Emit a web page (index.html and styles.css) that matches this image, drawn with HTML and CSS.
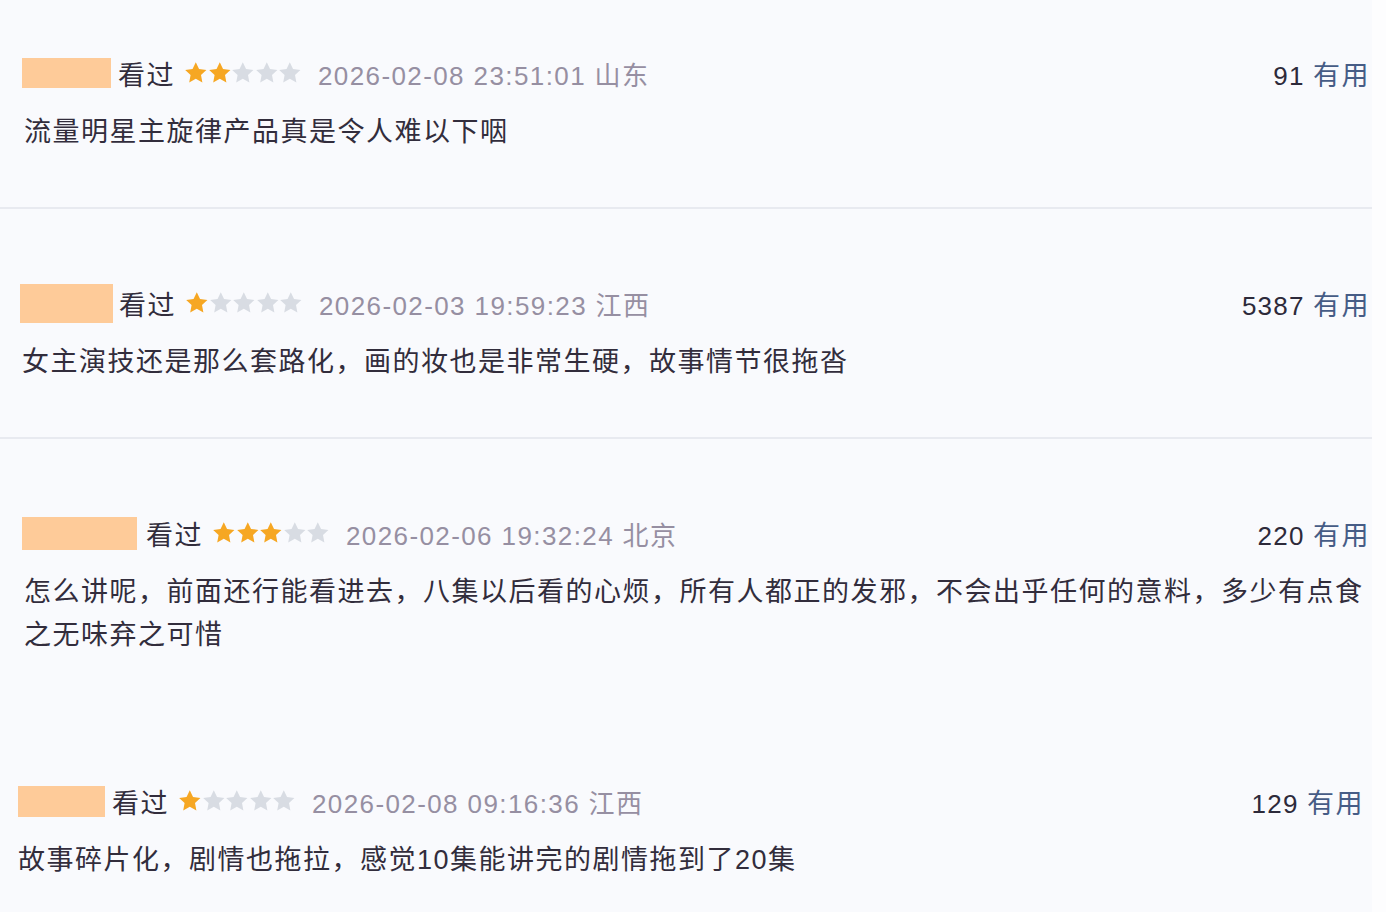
FILE: index.html
```html
<!DOCTYPE html>
<html lang="zh-CN">
<head>
    <meta charset="UTF-8">
    <meta name="viewport" content="width=device-width, initial-scale=1.0">
    <title>短评</title>
    <link rel="stylesheet" href="styles.css">
</head>
<body>
    <svg width="0" height="0" class="defs">
        <defs>
            <symbol id="star" viewBox="0 0 24 24">
                <path d="M12 1.2l3.3 6.9 7.5 1-5.5 5.2 1.4 7.5L12 18.1l-6.7 3.7 1.4-7.5-5.5-5.2 7.5-1z"/>
            </symbol>
        </defs>
    </svg>
    <div class="list">
        <div class="review review-1">
            <div class="header">
                <span class="name name-1"></span>
                <span class="watched">看过</span>
                <span class="stars">
                    <svg class="star on"><use href="#star"/></svg><svg class="star on"><use href="#star"/></svg><svg class="star"><use href="#star"/></svg><svg class="star"><use href="#star"/></svg><svg class="star"><use href="#star"/></svg>
                </span>
                <span class="time">2026-02-08 23:51:01 山东</span>
                <span class="votes"><span class="count">91</span> <span class="useful">有用</span></span>
            </div>
            <p class="comment">流量明星主旋律产品真是令人难以下咽</p>
        </div>

        <div class="review review-2">
            <div class="header">
                <span class="name name-2"></span>
                <span class="watched">看过</span>
                <span class="stars">
                    <svg class="star on"><use href="#star"/></svg><svg class="star"><use href="#star"/></svg><svg class="star"><use href="#star"/></svg><svg class="star"><use href="#star"/></svg><svg class="star"><use href="#star"/></svg>
                </span>
                <span class="time">2026-02-03 19:59:23 江西</span>
                <span class="votes"><span class="count">5387</span> <span class="useful">有用</span></span>
            </div>
            <p class="comment">女主演技还是那么套路化，画的妆也是非常生硬，故事情节很拖沓</p>
        </div>

        <div class="review review-3">
            <div class="header">
                <span class="name name-3"></span>
                <span class="watched">看过</span>
                <span class="stars">
                    <svg class="star on"><use href="#star"/></svg><svg class="star on"><use href="#star"/></svg><svg class="star on"><use href="#star"/></svg><svg class="star"><use href="#star"/></svg><svg class="star"><use href="#star"/></svg>
                </span>
                <span class="time">2026-02-06 19:32:24 北京</span>
                <span class="votes"><span class="count">220</span> <span class="useful">有用</span></span>
            </div>
            <p class="comment">怎么讲呢，前面还行能看进去，八集以后看的心烦，所有人都正的发邪，不会出乎任何的意料，多少有点食之无味弃之可惜</p>
        </div>

        <div class="review review-4">
            <div class="header">
                <span class="name name-4"></span>
                <span class="watched">看过</span>
                <span class="stars">
                    <svg class="star on"><use href="#star"/></svg><svg class="star"><use href="#star"/></svg><svg class="star"><use href="#star"/></svg><svg class="star"><use href="#star"/></svg><svg class="star"><use href="#star"/></svg>
                </span>
                <span class="time">2026-02-08 09:16:36 江西</span>
                <span class="votes"><span class="count">129</span> <span class="useful">有用</span></span>
            </div>
            <p class="comment">故事碎片化，剧情也拖拉，感觉10集能讲完的剧情拖到了20集</p>
        </div>
    </div>
</body>
</html>
```

FILE: styles.css
```css
body {
    margin: 0;
    padding: 0;
    background-color: #fdfdfe;
    font-family: "Liberation Sans", "Noto Sans CJK SC", sans-serif;
    color: #322d3c;
}

.defs {
    position: absolute;
    width: 0;
    height: 0;
}

.list {
    width: 1372px;
    min-height: 912px;
    background-color: #f9fafd;
}

.review {
    padding: 74px 3px 53px 22px;
    border-bottom: 2px solid #e8eaf0;
}

.review-1 {
    padding-top: 53px;
}

.review-2 {
    padding-left: 20px;
}

.review-3 {
    padding-bottom: 0;
    border-bottom: none;
}

.review-4 {
    padding: 124px 9px 0 18px;
    border-bottom: none;
}

.header {
    display: flex;
    align-items: center;
    height: 40px;
}

.name {
    display: block;
    width: 89px;
    height: 30px;
    background-color: #fecb99;
    margin-right: 7px;
}

.name-2 {
    width: 93px;
    height: 39px;
    margin-right: 6px;
}

.name-3 {
    width: 115px;
    height: 33px;
    margin-right: 9px;
}

.name-4 {
    width: 87px;
    height: 31px;
}

.watched {
    font-size: 27px;
    letter-spacing: 1.5px;
    margin-right: 9px;
}

.stars {
    display: flex;
    margin-right: 16px;
}

.star {
    width: 23.6px;
    height: 23.6px;
    fill: #d8dce3;
}

.star.on {
    fill: #f6a723;
}

.time {
    font-size: 26px;
    letter-spacing: 1.4px;
    color: #968fa2;
}

.votes {
    margin-left: auto;
    font-size: 26px;
    letter-spacing: 1.2px;
    margin-right: -1px;
}

.count {
    color: #2d2a3a;
}

.useful {
    color: #465c86;
    font-size: 27px;
    letter-spacing: 1.5px;
}

.comment {
    margin: 18px 0 0 2px;
    max-width: 1350px;
    font-size: 27px;
    line-height: 43px;
    letter-spacing: 1.5px;
}

.review-4 .comment {
    margin-left: 0;
}
```
